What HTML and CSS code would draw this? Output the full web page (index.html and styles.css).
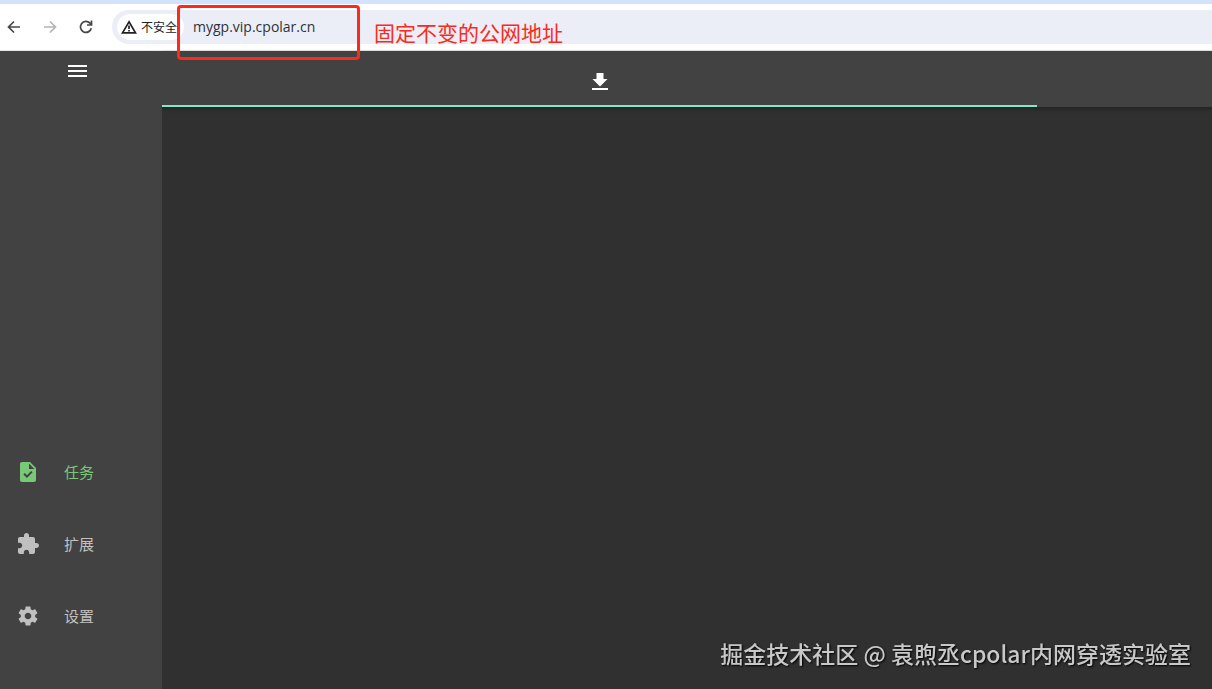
FILE: index.html
```
<!DOCTYPE html>
<html lang="zh-CN">
<head>
    <meta charset="UTF-8">
    <title>任务</title>
    <link rel="stylesheet" href="styles.css">
</head>
<body>
    <!-- Browser toolbar -->
    <div class="toolbar">
        <button class="nav-button" aria-label="后退">
            <svg width="18" height="18" viewBox="0 0 18 18"><path d="M15 9H4M9 3.500L3.500 9L9 14.500"/></svg>
        </button>
        <button class="nav-button" aria-label="前进" disabled>
            <svg width="18" height="18" viewBox="0 0 18 18"><path d="M3 9H14M9 3.500L14.500 9L9 14.500"/></svg>
        </button>
        <button class="nav-button" aria-label="刷新">
            <svg width="18" height="18" viewBox="0 0 18 18"><path d="M14.300 10.200A5.500 5.500 0 1 1 13 5.200L14.500 6.700M14.500 2.500V7H10"/></svg>
        </button>
        <div class="address-bar">
            <button class="security-chip">
                <svg width="16" height="14" viewBox="0 0 16 14"><path d="M8 1.800L14.500 12.800H1.500Z"/><path d="M8 5.500V9M8 10V11.500"/></svg>
                <span>不安全</span>
            </button>
            <input class="address-input" type="text" aria-label="地址" value="mygp.vip.cpolar.cn">
        </div>
    </div>

    <!-- Marker over the address -->
    <div class="marker">
        <div class="marker-frame"></div>
        <span class="marker-text">固定不变的公网地址</span>
    </div>

    <div class="app">
        <div class="sidebar">
            <button class="menu-button" aria-label="菜单">
                <svg width="24" height="24" viewBox="0 0 24 24"><path d="M3 18h19v-2H3v2zm0-5h19v-2H3v2zm0-7v2h19V6H3z"/></svg>
            </button>
            <nav class="side-nav">
                <a class="side-link active" href="#task">
                    <svg width="24" height="24" viewBox="0 0 24 24"><path d="M14 2H6c-1.100 0-2 .9-2 2v16c0 1.100.9 2 2 2h12c1.100 0 2-.9 2-2V8l-6-6zm-3.060 16L7.400 14.460l1.410-1.410 2.120 2.120 4.240-4.240 1.410 1.410L10.940 18zM13 9V3.500L18.500 9H13z"/></svg>
                    <span>任务</span>
                </a>
                <a class="side-link" href="#extension">
                    <svg width="24" height="24" viewBox="0 0 24 24"><path d="M20.500 11H19V7c0-1.100-.9-2-2-2h-4V3.500C13 2.120 11.880 1 10.500 1S8 2.120 8 3.500V5H4c-1.100 0-1.990.9-1.990 2v3.800H3.500c1.490 0 2.700 1.210 2.700 2.700s-1.210 2.700-2.700 2.700H2V20c0 1.100.9 2 2 2h3.800v-1.500c0-1.490 1.210-2.700 2.700-2.700 1.490 0 2.700 1.210 2.700 2.700V22H17c1.100 0 2-.9 2-2v-4h1.500c1.380 0 2.500-1.120 2.500-2.500S21.880 11 20.500 11z"/></svg>
                    <span>扩展</span>
                </a>
                <a class="side-link" href="#setting">
                    <svg width="24" height="24" viewBox="0 0 24 24"><path d="M19.140 12.940c.04-.3.06-.61.06-.94 0-.32-.02-.64-.07-.94l2.030-1.580c.18-.14.23-.41.12-.61l-1.920-3.320c-.12-.22-.37-.29-.59-.22l-2.390.96c-.5-.38-1.030-.7-1.620-.94l-.36-2.540c-.04-.24-.24-.41-.48-.41h-3.840c-.24 0-.43.17-.47.41l-.36 2.540c-.59.24-1.130.57-1.620.94l-2.390-.96c-.22-.08-.47 0-.59.22L2.740 8.870c-.12.21-.08.47.12.61l2.030 1.580c-.05.3-.09.63-.09.94s.02.64.07.94l-2.030 1.580c-.18.14-.23.41-.12.61l1.920 3.320c.12.22.37.29.59.22l2.390-.96c.5.38 1.030.7 1.620.94l.36 2.540c.05.24.24.41.48.41h3.840c.24 0 .44-.17.47-.41l.36-2.540c.59-.24 1.130-.56 1.620-.94l2.390.96c.22.08.47 0 .59-.22l1.920-3.320c.12-.22.07-.47-.12-.61l-2.010-1.580zM12 15.300c-1.820 0-3.300-1.480-3.300-3.300s1.480-3.300 3.300-3.300 3.300 1.480 3.300 3.300-1.480 3.300-3.300 3.300z"/></svg>
                    <span>设置</span>
                </a>
            </nav>
        </div>
        <div class="content">
            <div class="tabs">
                <button class="tab" aria-label="下载中">
                    <svg width="24" height="24" viewBox="0 0 24 24"><path d="M19.500 9h-4V3h-7v6h-4l7.500 7.500L19.500 9zM4 18v2h16v-2H4z"/></svg>
                </button>
            </div>
            <main class="task-list"></main>
        </div>
    </div>

    <div class="watermark">掘金技术社区 @ 袁煦丞cpolar内网穿透实验室</div>
</body>
</html>
```

FILE: styles.css
```
* {
    box-sizing: border-box;
}
body {
    margin: 0;
    min-height: 100vh;
    display: flex;
    flex-direction: column;
    font-family: "Open Sans", "Noto Sans CJK SC", sans-serif;
    background-color: #303030;
}
button {
    border: none;
    padding: 0;
    background: none;
    font-family: inherit;
    cursor: pointer;
}
svg {
    display: block;
    flex-shrink: 0;
}

/* Browser toolbar */
.toolbar {
    display: flex;
    align-items: center;
    border-top: 4px solid #d3e3fd;
    border-bottom: 1px solid #e4e4e0;
    padding: 6px 0 6px 5px;
    background-color: #fff;
}
.nav-button {
    width: 18px;
    margin-right: 18px;
    color: #474747;
}
.nav-button:disabled {
    color: #b4b4b4;
}
.nav-button svg,
.security-chip svg {
    fill: none;
    stroke: currentColor;
    stroke-width: 1.700;
}
.address-bar {
    flex: 1;
    display: flex;
    align-items: center;
    height: 34px;
    margin-left: -1px;
    padding-left: 5px;
    border-radius: 17px 0 0 17px;
    background-color: #ebeef7;
}
.security-chip {
    display: flex;
    align-items: center;
    gap: 4px;
    height: 26px;
    padding: 0 7px 0 4px;
    border-radius: 13px;
    background-color: #fff;
    color: #222;
    font-size: 12px;
    white-space: nowrap;
}
.address-input {
    flex: 1;
    min-width: 0;
    border: none;
    outline: none;
    padding: 0 9px 2px;
    background: none;
    color: #303236;
    font-family: inherit;
    font-size: 14px;
}

/* Marker lies over the toolbar and the page */
.marker {
    position: absolute;
    top: 5px;
    left: 177px;
    display: flex;
    align-items: center;
    gap: 14px;
    pointer-events: none;
}
.marker-frame {
    width: 183px;
    height: 55px;
    border: 3px solid #fa2a1e;
    border-radius: 4px;
}
.marker-text {
    color: #fa2a1e;
    font-size: 21px;
    line-height: 24px;
}

/* App */
.app {
    flex: 1;
    display: flex;
}
.sidebar {
    position: relative;
    z-index: 1;
    width: 162px;
    display: flex;
    flex-direction: column;
    justify-content: space-between;
    padding: 8px 0 37px;
    background-color: #424242;
}
.menu-button {
    width: 24px;
    margin-left: 65px;
    fill: #fff;
}
.side-nav {
    display: flex;
    flex-direction: column;
}
.side-link {
    display: flex;
    align-items: center;
    gap: 24px;
    height: 72px;
    padding-left: 16px;
    color: #c0c0c0;
    fill: currentColor;
    font-size: 15px;
    text-decoration: none;
}
.side-link span {
    padding-bottom: 2px;
}
.side-link.active {
    color: #78c878;
}
.content {
    flex: 1;
    display: flex;
    flex-direction: column;
}
.tabs {
    display: grid;
    grid-template-columns: 5fr 1fr;
    height: 56px;
    background-color: #424242;
    box-shadow: 0 2px 4px rgba(0, 0, 0, 0.3);
}
.tab {
    display: flex;
    align-items: center;
    justify-content: center;
    padding-top: 8px;
    border-bottom: 2px solid #80e8c4;
    fill: #fff;
}
.task-list {
    flex: 1;
}

.watermark {
    position: fixed;
    right: 21px;
    bottom: 18px;
    color: #c8c8c8;
    font-family: "Noto Sans CJK SC", sans-serif;
    font-size: 23px;
    font-weight: 500;
    line-height: 36px;
    text-shadow: 1px 1px 2px #000;
}
```
